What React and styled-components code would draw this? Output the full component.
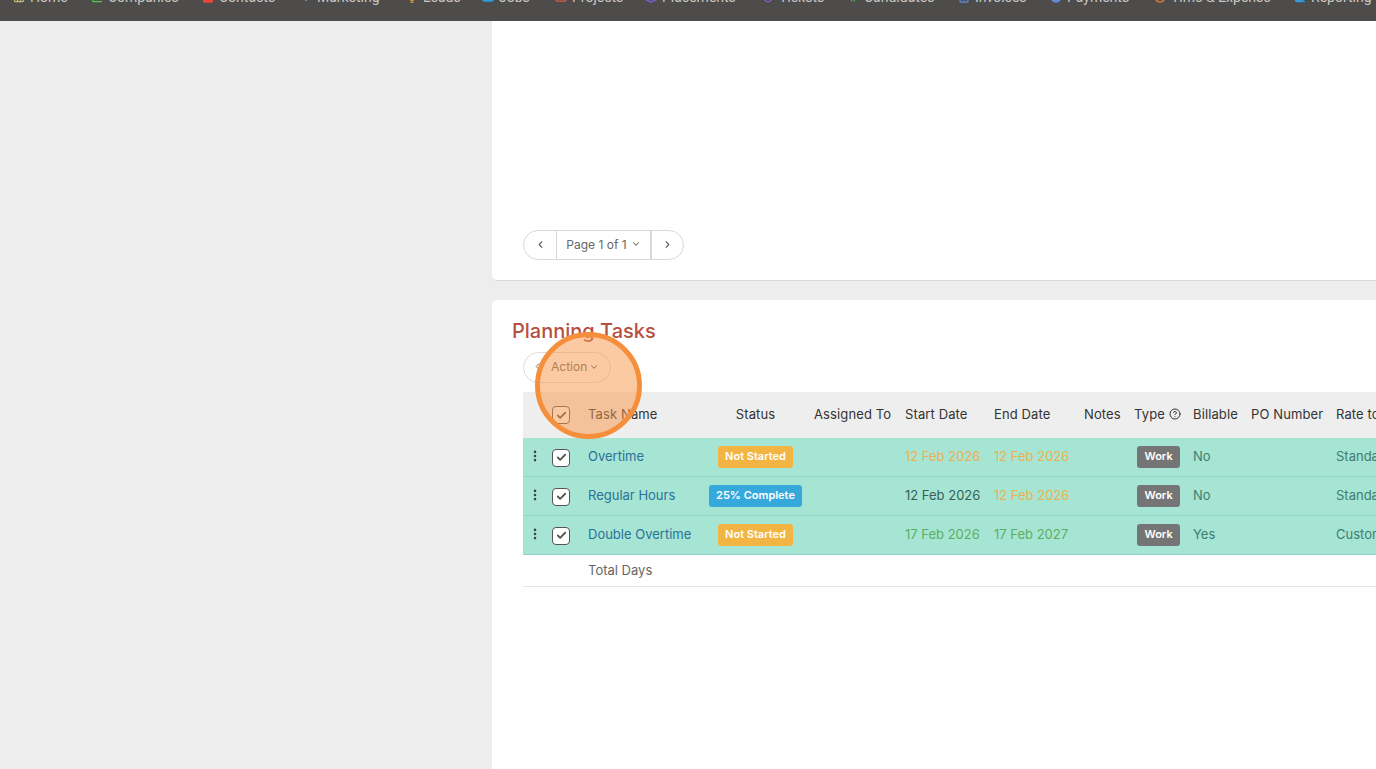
import styled, { createGlobalStyle } from 'styled-components';
import {
  Home, ChartColumn, Contact, Plus, Lightbulb, Briefcase, FolderKanban, Layers, Shield,
  PersonStanding, FileText, CircleDollarSign, Clock, ChevronLeft, ChevronRight,
  ChevronDown, EllipsisVertical, Check, CircleHelp,
} from 'lucide-react';

const GlobalStyle = createGlobalStyle`
  html, body {
    margin: 0;
    height: 100%;
    overflow: hidden;
    background: #ededed;
    font-family: Inter, "Liberation Sans", sans-serif;
  }
`;

const Page = styled.div`
  position: relative;
  width: 1376px;
  height: 769px;
  overflow: hidden;
`;

const Nav = styled.nav`
  display: flex;
  align-items: flex-end;
  height: 21px;
  padding-bottom: 15px;
  box-sizing: border-box;
  background: #4e4c4a;
  overflow: hidden;
`;

const NavItem = styled.a`
  flex: none;
  display: flex;
  align-items: center;
  gap: 5px;
  width: ${props => props.$width}px;
  padding-left: ${props => props.$pad || 0}px;
  box-sizing: border-box;
  font-family: Roboto, sans-serif;
  font-size: 14px;
  line-height: 18px;
  white-space: nowrap;
  color: #c9c7c4;
`;

const Body = styled.div`
  display: flex;
  height: 748px;
`;

const Sidebar = styled.aside`
  flex: none;
  width: 492px;
`;

const Main = styled.main`
  flex: 1;
  min-width: 0;
  display: flex;
  flex-direction: column;
  gap: 19px;
`;

const TopCard = styled.section`
  height: 260px;
  padding: 209px 0 0 31px;
  box-sizing: border-box;
  background: #fff;
  border-bottom: 1px solid #d9d9d9;
  border-radius: 0 0 0 5px;
`;

const Pager = styled.div`
  display: inline-flex;
  align-items: stretch;
  height: 30px;
  box-sizing: border-box;
  border: 1px solid #d8d8d8;
  border-radius: 15px;
  color: #666;
  font-size: 12px;
`;

const PagerButton = styled.div`
  display: flex;
  align-items: center;
  justify-content: center;
  width: ${props => props.$width}px;
  gap: 4px;
  padding-bottom: 2px;
  box-sizing: border-box;
  border-left: ${props => props.$divider || 0}px solid #d8d8d8;
`;

const TaskCard = styled.section`
  flex: 1;
  min-height: 0;
  padding-top: 19px;
  background: #fff;
  border-radius: 5px 0 0 0;
  overflow: hidden;
`;

const Title = styled.h2`
  margin: 0 0 9px 20px;
  font-size: 20px;
  line-height: 24px;
  font-weight: 500;
  color: #b5503f;
`;

const Toolbar = styled.div`
  display: flex;
  margin: 0 0 9px 31px;
`;

const ActionPill = styled.div`
  display: flex;
  align-items: center;
  gap: 2px;
  width: 88px;
  height: 31px;
  padding: 0 0 2px 8px;
  box-sizing: border-box;
  border: 1px solid #dcdcdc;
  border-radius: 16px;
  color: #666;
  font-size: 12px;
`;

const ActionLabel = styled.span`
  margin-left: 6px;
`;

const Table = styled.div`
  margin-left: 31px;
  width: 1100px;
`;

const Row = styled.div`
  display: grid;
  grid-template-columns: 29px 36px 109px 117px 91px 89px 90px 50px 59px 58px 85px 287px;
  align-items: center;
  height: ${props => props.$height}px;
  padding-bottom: ${props => props.$lift || 1}px;
  box-sizing: border-box;
  background: ${props => props.$bg || 'transparent'};
  border-bottom: 1px solid ${props => props.$line || 'transparent'};
  font-size: 13px;
  white-space: nowrap;
  color: ${props => props.$color || '#666'};
`;

const HeadCell = styled.div`
  display: flex;
  align-items: center;
  gap: ${props => props.$gap || 0}px;
  justify-content: ${props => (props.$center ? 'center' : 'flex-start')};
  color: #333;
  font-size: 13px;
  letter-spacing: 0.12px;
`;

const Cell = styled.div`
  display: flex;
  justify-content: ${props => (props.$center ? 'center' : 'flex-start')};
  color: ${props => props.$color || 'inherit'};
`;

const Handle = styled.div`
  display: flex;
  padding-left: 5px;
  color: #444;
`;

const Box = styled.div`
  display: flex;
  align-items: center;
  justify-content: center;
  width: 18px;
  height: 18px;
  margin-top: ${props => props.$drop}px;
  box-sizing: border-box;
  border: 1.5px solid #555;
  border-radius: 4px;
  background: #fff;
  color: #555;
`;

const Badge = styled.span`
  display: inline-block;
  height: 22px;
  padding: 0 ${props => props.$pad || 7}px;
  margin-top: 2px;
  margin-left: ${props => props.$left || 0}px;
  border-radius: 3px;
  background: ${props => props.$bg};
  color: #fff;
  font-size: 11px;
  font-weight: 600;
  line-height: 21px;
`;

const Spot = styled.div`
  position: absolute;
  left: 535px;
  top: 332px;
  width: 107px;
  height: 107px;
  box-sizing: border-box;
  border: 5px solid #f68f3c;
  border-radius: 50%;
  background: rgba(248, 150, 70, 0.5);
`;

const navItems = [
  { label: 'Home', Icon: Home, color: '#c2bd74', width: 91, pad: 13 },
  { label: 'Companies', Icon: ChartColumn, color: '#5cc24e', width: 111 },
  { label: 'Contacts', Icon: Contact, color: '#e5463c', width: 98, filled: true },
  { label: 'Marketing', Icon: Plus, color: '#b0b0aa', width: 106 },
  { label: 'Leads', Icon: Lightbulb, color: '#eda63c', width: 76 },
  { label: 'Jobs', Icon: Briefcase, color: '#2f9ad6', width: 73, filled: true },
  { label: 'Projects', Icon: FolderKanban, color: '#d8584c', width: 90 },
  { label: 'Placements', Icon: Layers, color: '#7f63dc', width: 117 },
  { label: 'Tickets', Icon: Shield, color: '#7f63dc', width: 85 },
  { label: 'Candidates', Icon: PersonStanding, color: '#4fb04f', width: 111 },
  { label: 'Invoices', Icon: FileText, color: '#5f8ce0', width: 92 },
  { label: 'Payments', Icon: CircleDollarSign, color: '#5f8ce0', width: 104, filled: true },
  { label: 'Time & Expense', Icon: Clock, color: '#e8803c', width: 140 },
  { label: 'Reporting', Icon: ChartColumn, color: '#2f9ad6', width: 82, filled: true },
];

const ORANGE = '#eeb04e';
const GREEN = '#5cae62';

const tasks = [
  { name: 'Overtime', status: 'Not Started', statusBg: '#f2b544', start: '12 Feb 2026', startColor: ORANGE, end: '12 Feb 2026', endColor: ORANGE, billable: 'No', rate: 'Standard' },
  { name: 'Regular Hours', status: '25% Complete', statusBg: '#36a9dc', start: '12 Feb 2026', startColor: '#3a5f56', end: '12 Feb 2026', endColor: ORANGE, billable: 'No', rate: 'Standard' },
  { name: 'Double Overtime', status: 'Not Started', statusBg: '#f2b544', start: '17 Feb 2026', startColor: GREEN, end: '17 Feb 2027', endColor: GREEN, billable: 'Yes', rate: 'Custom' },
];

export default function App() {
  return (
    <Page>
      <GlobalStyle />
      <Nav>
        {navItems.map(({ label, Icon, color, width, pad, filled }) => (
          <NavItem key={label} $width={width} $pad={pad}>
            <Icon size={12} color={color} strokeWidth={2.5} fill={filled ? color : 'none'} />
            {label}
          </NavItem>
        ))}
      </Nav>
      <Body>
        <Sidebar />
        <Main>
          <TopCard>
            <Pager>
              <PagerButton $width={32}><ChevronLeft size={11} strokeWidth={2.5} /></PagerButton>
              <PagerButton $width={94} $divider={1}>Page 1 of 1 <ChevronDown size={10} strokeWidth={2.5} /></PagerButton>
              <PagerButton $width={33} $divider={2}><ChevronRight size={11} strokeWidth={2.5} /></PagerButton>
            </Pager>
          </TopCard>
          <TaskCard>
            <Title>Planning Tasks</Title>
            <Toolbar>
              <ActionPill>
                <ChevronLeft size={11} />
                <ActionLabel>Action</ActionLabel>
                <ChevronDown size={10} strokeWidth={2.5} />
              </ActionPill>
            </Toolbar>
            <Table>
              <Row $height={46} $bg="#eeeeee">
                <span />
                <Box $drop={2}><Check size={11} strokeWidth={4} /></Box>
                <HeadCell>Task Name</HeadCell>
                <HeadCell $center>Status</HeadCell>
                <HeadCell>Assigned To</HeadCell>
                <HeadCell>Start Date</HeadCell>
                <HeadCell>End Date</HeadCell>
                <HeadCell>Notes</HeadCell>
                <HeadCell $gap={4}>Type <CircleHelp size={12} /></HeadCell>
                <HeadCell>Billable</HeadCell>
                <HeadCell>PO Number</HeadCell>
                <HeadCell>Rate to Charge</HeadCell>
              </Row>
              {tasks.map(task => (
                <Row key={task.name} $height={39} $lift={3} $bg="#a6e5d3" $line="#8cd6c3" $color="#3f7d6f">
                  <Handle><EllipsisVertical size={14} strokeWidth={2.5} /></Handle>
                  <Box $drop={4}><Check size={11} strokeWidth={4} /></Box>
                  <Cell $color="#2b7198">{task.name}</Cell>
                  <Cell $center><Badge $bg={task.statusBg}>{task.status}</Badge></Cell>
                  <span />
                  <Cell $color={task.startColor}>{task.start}</Cell>
                  <Cell $color={task.endColor}>{task.end}</Cell>
                  <span />
                  <Cell><Badge $bg="#757575" $left={3} $pad={7.5}>Work</Badge></Cell>
                  <Cell>{task.billable}</Cell>
                  <span />
                  <Cell>{task.rate}</Cell>
                </Row>
              ))}
              <Row $height={32} $line="#e4e4e4">
                <span />
                <span />
                <Cell>Total Days</Cell>
              </Row>
            </Table>
          </TaskCard>
        </Main>
      </Body>
      <Spot />
    </Page>
  );
}
